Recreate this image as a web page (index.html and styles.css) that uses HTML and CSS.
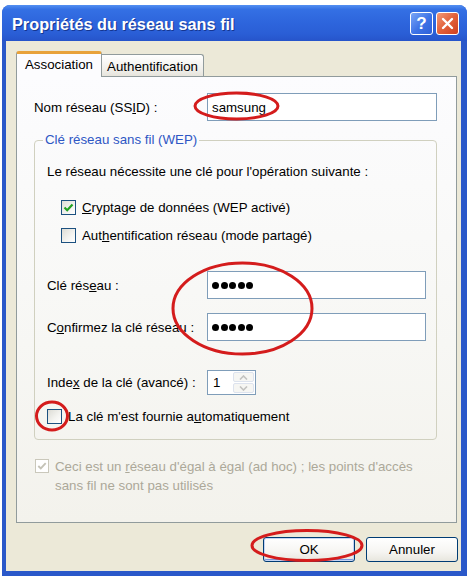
FILE: index.html
```html
<!DOCTYPE html>
<html lang="fr">
<head>
<meta charset="utf-8">
<title>Propriétés du réseau sans fil</title>
<link rel="stylesheet" href="styles.css">
</head>
<body>
<div class="window">
  <div class="titlebar">
    <span class="title">Propriétés du réseau sans fil</span>
    <div class="tb-buttons">
      <div class="tb-btn help">?</div>
      <div class="tb-btn close">
        <svg width="13" height="13" viewBox="0 0 13 13"><path d="M2 2 L11 11 M11 2 L2 11" stroke="#fff" stroke-width="2.4" stroke-linecap="round"/></svg>
      </div>
    </div>
  </div>
  <div class="client">
    <div class="tabs">
      <div class="tab active">Association</div>
      <div class="tab">Authentification</div>
    </div>
    <div class="panel">
      <div class="row ssid-row">
        <span class="lbl">Nom réseau (SS<u>I</u>D) :</span>
        <div class="field ssid">samsung</div>
      </div>
      <fieldset class="group">
        <legend>Clé réseau sans fil (WEP)</legend>
        <p class="intro">Le réseau nécessite une clé pour l'opération suivante :</p>
        <div class="check-row indent">
          <span class="cb"><svg width="13" height="13" viewBox="0 0 13 13"><path d="M2.5 6.5 L5.2 9.2 L10.5 3.5" fill="none" stroke="#21A121" stroke-width="2.2"/></svg></span>
          <span><u>C</u>ryptage de données (WEP activé)</span>
        </div>
        <div class="check-row indent second">
          <span class="cb"></span>
          <span>Aut<u>h</u>entification réseau (mode partagé)</span>
        </div>
        <div class="row key-row">
          <span class="lbl2">Clé rés<u>e</u>au :</span>
          <div class="field key"><span class="dot"></span><span class="dot"></span><span class="dot"></span><span class="dot"></span><span class="dot"></span></div>
        </div>
        <div class="row key-row confirm">
          <span class="lbl2">C<u>o</u>nfirmez la clé réseau :</span>
          <div class="field key"><span class="dot"></span><span class="dot"></span><span class="dot"></span><span class="dot"></span><span class="dot"></span></div>
        </div>
        <div class="row index-row">
          <span class="lbl2">Inde<u>x</u> de la clé (avancé) :</span>
          <div class="spin">
            <span class="spin-val">1</span>
            <div class="spin-btns">
              <span class="sb"><svg width="9" height="5" viewBox="0 0 9 5"><path d="M1 4.5 L4.5 1 L8 4.5" fill="none" stroke="#C2C2C0" stroke-width="1.6"/></svg></span>
              <span class="sb"><svg width="9" height="5" viewBox="0 0 9 5"><path d="M1 0.5 L4.5 4 L8 0.5" fill="none" stroke="#C2C2C0" stroke-width="1.6"/></svg></span>
            </div>
          </div>
        </div>
        <div class="check-row auto">
          <span class="cb"></span>
          <span>La clé m'est fournie a<u>u</u>tomatiquement</span>
        </div>
      </fieldset>
      <div class="adhoc">
        <span class="cb disabled"><svg width="12" height="12" viewBox="0 0 13 13"><path d="M2.5 6.5 L5.2 9.2 L10.5 3.5" fill="none" stroke="#C4C2B6" stroke-width="2"/></svg></span>
        <span class="adhoc-text">Ceci est un <u>r</u>éseau d'égal à égal (ad hoc) ; les points d'accès<br>sans fil ne sont pas utilisés</span>
      </div>
    </div>
    <div class="buttons">
      <button class="btn default">OK</button>
      <button class="btn">Annuler</button>
    </div>
  </div>
</div>
<svg class="annotations" width="473" height="576" viewBox="0 0 473 576">
  <g fill="none" stroke="#D41C1C" stroke-width="3">
    <ellipse cx="236.5" cy="106" rx="41.5" ry="13"/>
    <ellipse cx="242.5" cy="308.5" rx="69.5" ry="45.5"/>
    <ellipse cx="52" cy="416" rx="15.5" ry="14"/>
    <ellipse cx="307" cy="545.5" rx="55" ry="15"/>
  </g>
</svg>
</body>
</html>
```
FILE: styles.css
```css
* { box-sizing: border-box; }

body {
  margin: 0;
  background: #ffffff;
  font-family: "Liberation Sans", Arial, sans-serif;
  font-size: 13.3px;
  color: #000;
}

.window {
  width: 465px;
  height: 571px;
  margin: 5px 0 0 2px;
  background: #2A58C9;
  border-radius: 8px 8px 0 0;
  display: flex;
  flex-direction: column;
}

.titlebar {
  height: 36px;
  flex: none;
  display: flex;
  align-items: center;
  justify-content: space-between;
  padding: 0 8px 0 10px;
  border-radius: 8px 8px 0 0;
  background: linear-gradient(#5490F2 0%, #3470E4 12%, #2E66DD 45%, #2A5ED6 80%, #2654CA 100%);
}

.title {
  color: #fff;
  font-weight: bold;
  font-size: 16.3px;
  padding-top: 3px;
  text-shadow: 1px 1px 0 #15358F;
}

.tb-buttons {
  display: flex;
  gap: 3px;
  padding-top: 1px;
}

.tb-btn {
  width: 23px;
  height: 23px;
  border: 1px solid #fff;
  border-radius: 3px;
  display: flex;
  align-items: center;
  justify-content: center;
}

.help {
  background: linear-gradient(135deg, #7AA6F6 0%, #3D72E6 55%, #2E60D8 100%);
  color: #fff;
  font-weight: bold;
  font-size: 17px;
  line-height: 1;
}

.close {
  background: linear-gradient(135deg, #F29A78 0%, #E2603A 50%, #CE4020 100%);
}

.client {
  flex: 1;
  margin: 0 6px 5px 4px;
  background: #ECE9D8;
  padding: 10px 3px 0 10px;
  display: flex;
  flex-direction: column;
}

.tabs {
  display: flex;
  align-items: flex-end;
  height: 26px;
  margin-bottom: -1px;
  position: relative;
  z-index: 1;
  flex: none;
}

.tab {
  height: 22px;
  margin-bottom: 1px;
  width: 102px;
  border: 1px solid #919B9C;
  border-left: none;
  border-bottom: none;
  border-radius: 0 3px 0 0;
  background: linear-gradient(#FFFFFF, #F0EFEA 70%, #E6E4DC);
  display: flex;
  align-items: center;
  justify-content: center;
  padding-top: 1px;
}

.tab.active {
  width: 86px;
  height: 26px;
  margin-bottom: 0;
  border-left: 1px solid #919B9C;
  border-top: 3px solid #E8A23A;
  border-radius: 3px 3px 0 0;
  background: #FCFCFE;
  padding-top: 0;
  padding-bottom: 2px;
}

.panel {
  flex: none;
  width: 441px;
  height: 447px;
  border: 1px solid #919B9C;
  background: linear-gradient(#FCFCFE, #F7F7F4 60%, #F3F2EC);
  padding: 16px 0 0 17px;
}

.row {
  display: flex;
  align-items: center;
}

.ssid-row { height: 28px; }

.lbl { width: 173px; }

.lbl2 { width: 160px; white-space: nowrap; }

.field {
  height: 28px;
  border: 1px solid #7F9DB9;
  background: #fff;
  display: flex;
  align-items: center;
}

.ssid {
  width: 230px;
  padding-left: 4px;
}

.group {
  margin: 11px 0 0 0;
  width: 403px;
  min-width: 0;
  border: 1px solid #D0D0BF;
  border-radius: 4px;
  padding: 0 10px 15px 12px;
}

.group legend {
  color: #2E57C4;
  line-height: 16px;
  padding: 0 2px;
  margin-left: -4px;
}

.intro {
  margin: 16px 0 0 0;
  line-height: 16px;
}

.check-row {
  display: flex;
  align-items: center;
  gap: 6px;
  height: 15px;
}

.check-row.indent {
  margin-top: 20px;
  padding-left: 14px;
}

.check-row.indent.second { margin-top: 13px; }

.cb {
  flex: none;
  width: 15px;
  height: 15px;
  border: 1px solid #1C5180;
  background: linear-gradient(135deg, #DCDCD5 0%, #F4F4F1 60%, #FFFFFF 100%);
  display: flex;
  align-items: center;
  justify-content: center;
}

.cb.disabled {
  width: 14px;
  height: 14px;
  border-color: #CAC8BB;
  background: #fff;
}

.key-row { margin-top: 28px; height: 28px; }

.key-row.confirm { margin-top: 14px; }

.key {
  width: 219px;
  padding-left: 4px;
  gap: 1.5px;
}

.dot {
  width: 7px;
  height: 7px;
  border-radius: 50%;
  background: #000;
}

.index-row { margin-top: 29px; height: 25px; }

.spin {
  width: 49px;
  height: 25px;
  border: 1px solid #7F9DB9;
  background: #fff;
  display: flex;
  justify-content: space-between;
  padding: 1px;
}

.spin-val {
  padding-left: 4px;
  display: flex;
  align-items: center;
}

.spin-btns {
  width: 21px;
  display: flex;
  flex-direction: column;
  gap: 1px;
}

.sb {
  flex: 1;
  border: 1px solid #DDE3EE;
  border-radius: 2px;
  background: #F6F6F3;
  display: flex;
  align-items: center;
  justify-content: center;
}

.check-row.auto { margin-top: 14px; }

.adhoc {
  margin: 17px 0 0 1px;
  display: flex;
  align-items: flex-start;
  gap: 6px;
  color: #ACA899;
  line-height: 19px;
}

.adhoc .cb { margin-top: 2px; }

.adhoc-text { white-space: nowrap; }

.buttons {
  flex: none;
  display: flex;
  justify-content: flex-end;
  gap: 11px;
  margin-top: 14px;
}

.btn {
  width: 92px;
  height: 25px;
  border: 1px solid #003C74;
  border-radius: 3px;
  background: linear-gradient(#FFFFFF 0%, #F6F5F2 60%, #E8E6DE 100%);
  font-family: "Liberation Sans", Arial, sans-serif;
  font-size: 13.3px;
  color: #000;
  padding: 0;
}

.btn.default {
  box-shadow: inset 0 0 0 1px #C4D4F4, inset 0 -2px 0 #7C98E0, inset 1px 0 0 #AFC4F0;
}

.annotations {
  position: absolute;
  top: 0;
  left: 0;
  pointer-events: none;
}
```
